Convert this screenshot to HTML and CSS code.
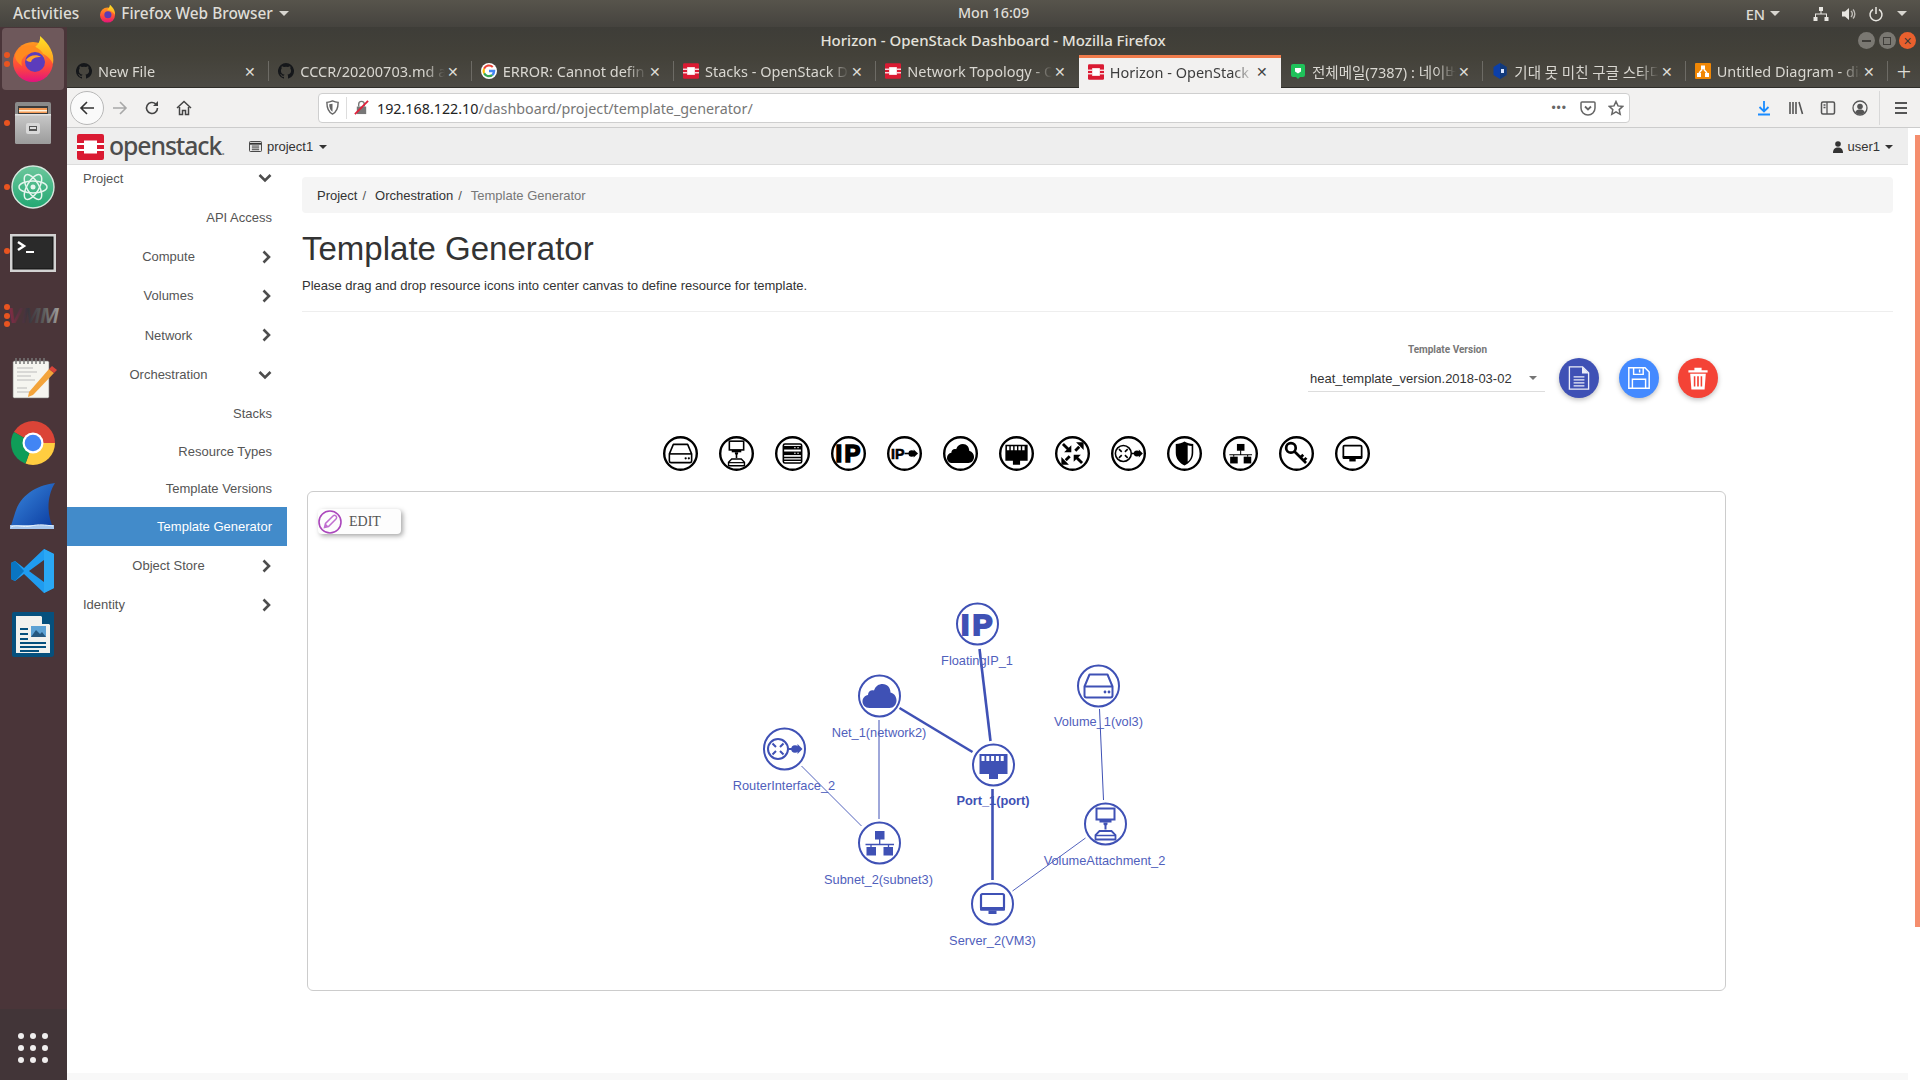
FILE: index.html
```html
<!DOCTYPE html>
<html lang="en">
<head>
<meta charset="utf-8">
<title>Horizon - OpenStack Dashboard</title>
<link rel="stylesheet" href="styles.css">
</head>
<body>
<svg class="defs" width="0" height="0" aria-hidden="true">
  <defs>
    <linearGradient id="g-fox" x1="0" y1="0" x2="0" y2="1"><stop offset="0" stop-color="#ff9a1f"/><stop offset=".6" stop-color="#ff4a3a"/><stop offset="1" stop-color="#e3127e"/></linearGradient>
    <linearGradient id="g-flame" x1="0" y1="0" x2="0" y2="1"><stop offset="0" stop-color="#ffe226"/><stop offset="1" stop-color="#ff9a1f"/></linearGradient>
    <linearGradient id="g-atom" x1="0" y1="0" x2="0" y2="1"><stop offset="0" stop-color="#6cc79c"/><stop offset="1" stop-color="#22a873"/></linearGradient>
    <linearGradient id="g-fin" x1="0" y1="0" x2="1" y2="1"><stop offset="0" stop-color="#3b8ae0"/><stop offset="1" stop-color="#0a3a9e"/></linearGradient>
    <linearGradient id="g-cab" x1="0" y1="0" x2="0" y2="1"><stop offset="0" stop-color="#c9c9c9"/><stop offset="1" stop-color="#9b9b9b"/></linearGradient>
    <linearGradient id="g-vm" x1="0" y1="0" x2="1" y2="0"><stop offset="0" stop-color="#8a2b45"/><stop offset=".4" stop-color="#3a353d"/><stop offset=".7" stop-color="#5c5c5c"/><stop offset="1" stop-color="#a0a0a0"/></linearGradient>
    <symbol id="f-github" viewBox="0 0 16 16"><path fill="#15171a" d="M8 0a8 8 0 0 0-2.500 15.600c.4.1.5-.2.5-.4v-1.400c-2.200.5-2.700-1-2.700-1-.4-.9-.9-1.200-.9-1.200-.7-.5.1-.5.1-.5.8.1 1.200.8 1.200.8.7 1.200 1.900.9 2.300.7.1-.5.3-.9.5-1.100-1.800-.2-3.600-.9-3.600-4 0-.9.3-1.600.8-2.100-.1-.2-.4-1 .1-2.100 0 0 .7-.2 2.200.8a7.600 7.600 0 0 1 4 0c1.500-1 2.200-.8 2.200-.8.500 1.100.200 1.900.100 2.100.500.500.800 1.200.800 2.100 0 3.100-1.900 3.800-3.700 4 .300.300.600.800.600 1.500v2.200c0 .200.100.500.500.400A8 8 0 0 0 8 0z"/></symbol>
    <symbol id="f-google" viewBox="0 0 16 16"><circle cx="8" cy="8" r="8" fill="#fff"/><path d="M8 3.600a4.300 4.300 0 0 1 3 1.200l1.500-1.500A6.500 6.500 0 0 0 2.200 5.100L4 6.500A4.200 4.200 0 0 1 8 3.600z" fill="#ea4335"/><path d="M14.300 8.100c0-.5 0-.9-.1-1.300H8v2.500h3.600a3 3 0 0 1-1.300 2l1.900 1.400a6.300 6.300 0 0 0 2.100-4.600z" fill="#4285f4"/><path d="M4 9.500l-1.800 1.400A6.500 6.500 0 0 0 12.200 12.700l-1.900-1.400A4.200 4.200 0 0 1 4 9.500z" fill="#34a853"/><path d="M3.800 8c0-.5.100-1 .2-1.500L2.200 5.100a6.500 6.500 0 0 0 0 5.800L4 9.500A4.300 4.300 0 0 1 3.800 8z" fill="#fbbc05"/></symbol>
    <symbol id="f-os" viewBox="0 0 27 26"><rect width="27" height="26" rx="2" fill="#da1a32"/><rect x="7" y="6.500" width="13" height="13" fill="#fff"/><rect y="9" width="7" height="2" fill="#fff"/><rect y="15" width="7" height="2" fill="#fff"/><rect x="20" y="9" width="7" height="2" fill="#fff"/><rect x="20" y="15" width="7" height="2" fill="#fff"/></symbol>
    <symbol id="f-naver" viewBox="0 0 16 16"><path d="M3 1h10a2 2 0 0 1 2 2v9a2 2 0 0 1-2 2H10l-2 2-2-2H3a2 2 0 0 1-2-2V3a2 2 0 0 1 2-2z" fill="#1fc25a"/><path d="M5 5h6v3.500L8 10.500 5 8.500z" fill="#fff"/></symbol>
    <symbol id="f-blue" viewBox="0 0 16 16"><path d="M8 0l6.500 4v8L8 16l-6.500-4V4z" fill="#0c3fa8"/><path d="M8 0l6.500 4v8L8 16z" fill="#123a7a"/><rect x="9" y="6" width="3" height="4" fill="#dbe6ff"/></symbol>
    <symbol id="f-drawio" viewBox="0 0 16 16"><rect width="16" height="16" rx="1" fill="#f08705"/><rect x="6" y="2.500" width="4" height="4" fill="#fff"/><rect x="2" y="10" width="4" height="4" fill="#fff"/><rect x="10" y="10" width="4" height="4" fill="#fff"/><path d="M7 6.500L4 10M9 6.500l3 3.500" stroke="#fff" stroke-width="1.400"/></symbol>

    <symbol id="n-volume" viewBox="0 0 44 44"><circle class="ring" cx="22" cy="22" r="20.500" fill="none" stroke="currentColor"/><path d="M13 10.500h18l5 12v9a2 2 0 0 1-2 2H10a2 2 0 0 1-2-2v-9z" fill="none" stroke="currentColor" stroke-width="2" stroke-linejoin="round"/><path d="M8 22.500h28" stroke="currentColor" stroke-width="2"/><circle cx="28.500" cy="28" r="1.400" fill="currentColor"/><circle cx="32.500" cy="28" r="1.400" fill="currentColor"/></symbol>
    <symbol id="n-attach" viewBox="0 0 44 44"><circle class="ring" cx="22" cy="22" r="20.500" fill="none" stroke="currentColor"/><rect x="13" y="6.500" width="18" height="11" fill="none" stroke="currentColor" stroke-width="2"/><rect x="16" y="17.500" width="12" height="3" fill="currentColor"/><path d="M20 20.500h4v2l-1 1v4h-2v-4l-1-1z" fill="currentColor"/><path d="M16 29h12l4 4v4.500H12V33z" fill="none" stroke="currentColor" stroke-width="1.800"/><path d="M12 33.500h20" stroke="currentColor" stroke-width="1.500"/></symbol>
    <symbol id="n-rack" viewBox="0 0 44 44"><circle class="ring" cx="22" cy="22" r="20.500" fill="none" stroke="currentColor"/><rect x="10.500" y="10" width="23" height="24" rx="2" fill="none" stroke="currentColor" stroke-width="2"/><rect x="10.500" y="12.500" width="23" height="4.500" fill="currentColor"/><rect x="10.500" y="19.500" width="23" height="4.500" fill="currentColor"/><path d="M11 27h22M11 30.500h22" stroke="currentColor" stroke-width="2"/><path d="M24 14.700h2M28 14.700h2M24 21.700h2M28 21.700h2" stroke="#fff" stroke-width="1.200"/></symbol>
    <symbol id="n-ip" viewBox="0 0 44 44"><circle class="ring" cx="22" cy="22" r="20.500" fill="none" stroke="currentColor"/><text x="22.800" y="33" text-anchor="middle" font-family="Liberation Sans" font-weight="700" font-size="30" letter-spacing="3" fill="currentColor" stroke="currentColor" stroke-width="2">IP</text></symbol>
    <symbol id="n-iparrow" viewBox="0 0 44 44"><circle class="ring" cx="22" cy="22" r="20.500" fill="none" stroke="currentColor"/><text x="5" y="28.500" font-family="Liberation Sans" font-weight="700" font-size="18" fill="currentColor" stroke="currentColor" stroke-width=".7">IP</text><path d="M22 22h7" stroke="currentColor" stroke-width="2"/><circle cx="31" cy="22" r="4" fill="currentColor"/><path d="M33.500 17l5.500 5-5.500 5z" fill="currentColor"/></symbol>
    <symbol id="n-cloud" viewBox="0 0 44 44"><circle class="ring" cx="22" cy="22" r="20.500" fill="none" stroke="currentColor"/><path d="M12 34C7.500 34 5 30.500 5 27.500 5 24 7.500 21.500 10.500 21 10.500 17.500 13.500 15.500 16.500 16.500 18 12 21.500 10 25 10 30 10 33 14 33 18.500 37 19.500 39 23 39 26.500 39 30.500 36 34 32 34z" fill="currentColor"/></symbol>
    <symbol id="n-port" viewBox="0 0 44 44"><circle class="ring" cx="22" cy="22" r="20.500" fill="none" stroke="currentColor"/><path fill-rule="evenodd" fill="currentColor" d="M8 11h28v20h-9.500v5h-9v-5H8zM10 13v5h3v-5zM14.800 13v5h3v-5zM19.600 13v5h3v-5zM24.400 13v5h3v-5zM29.200 13v5h3v-5z"/></symbol>
    <symbol id="n-router" viewBox="0 0 44 44"><circle class="ring" cx="22" cy="22" r="20.500" fill="none" stroke="currentColor"/><path d="M10 10l7 7M25.500 18.500l5-5M18.500 25.500l-5 5M34 34l-7-7" stroke="currentColor" stroke-width="3.600"/><path d="M20.500 20.500v-9l-9 9zM36 8h-9.500l9.500 9.500zM8 36h9.500L8 26.500zM23.500 23.500v9l9-9z" fill="currentColor"/></symbol>
    <symbol id="n-routerif" viewBox="0 0 44 44"><circle class="ring" cx="22" cy="22" r="20.500" fill="none" stroke="currentColor"/><circle cx="15.500" cy="22" r="10" fill="none" stroke="currentColor" stroke-width="2"/><path d="M10 16.500l3.500 3.500M21 16.500L17.500 20M10 27.500l3.500-3.500M21 27.500L17.500 24" stroke="currentColor" stroke-width="2"/><path d="M26 22h4" stroke="currentColor" stroke-width="2"/><circle cx="32.500" cy="22" r="3.800" fill="currentColor"/><path d="M35 17l5 5-5 5z" fill="currentColor"/></symbol>
    <symbol id="n-shield" viewBox="0 0 44 44"><circle class="ring" cx="22" cy="22" r="20.500" fill="none" stroke="currentColor"/><path d="M11 10c4 0 8-1 11-3 3 2 7 3 11 3v11c0 8-5 13-11 16-6-3-11-8-11-16z" fill="currentColor"/><path d="M26 11.500c1.500.6 3.200 1 5 1v8.500c0 5.500-2.200 9-5 11.500z" fill="#fff"/></symbol>
    <symbol id="n-subnet" viewBox="0 0 44 44"><circle class="ring" cx="22" cy="22" r="20.500" fill="none" stroke="currentColor"/><rect x="17.500" y="10" width="9.500" height="8.500" fill="currentColor"/><rect x="9" y="26" width="9.500" height="8.500" fill="currentColor"/><rect x="26" y="26" width="9.500" height="8.500" fill="currentColor"/><path d="M22.200 18v5.500M8 23.500h28.500M13.500 23.500V26M31 23.500V26" stroke="currentColor" stroke-width="1.300" fill="none"/></symbol>
    <symbol id="n-key" viewBox="0 0 44 44"><circle class="ring" cx="22" cy="22" r="20.500" fill="none" stroke="currentColor"/><circle cx="15" cy="15" r="6" fill="none" stroke="currentColor" stroke-width="3.400"/><path d="M19.500 19.500L34 34M27 27l3.500-3.500M31 31l3.500-3.500" stroke="currentColor" stroke-width="3.400"/></symbol>
    <symbol id="n-server" viewBox="0 0 44 44"><circle class="ring" cx="22" cy="22" r="20.500" fill="none" stroke="currentColor"/><rect x="10.500" y="12" width="23" height="15" rx="1.500" fill="none" stroke="currentColor" stroke-width="2.200"/><rect x="9.500" y="25" width="25" height="3.800" rx="1" fill="currentColor"/><rect x="18" y="28.500" width="8" height="3.500" fill="currentColor"/></symbol>
  </defs>
</svg>

<header class="topbar">
  <span class="top-left">Activities</span>
  <svg class="top-fox" viewBox="0 0 48 48"><circle cx="24" cy="28" r="19" fill="url(#g-fox)"/><path d="M30 2c8 7 14 15 13 26-4-8-12-12-20-12 3-4 7-8 7-14z" fill="url(#g-flame)"/><circle cx="25" cy="27" r="9" fill="#5b3bb5"/></svg>
  <span class="top-left">Firefox Web Browser</span>
  <i class="caret caret-light"></i>
  <span class="clock">Mon 16:09</span>
  <div class="tray">
    <span class="en">EN</span><i class="caret caret-light"></i>
    <svg class="tray-net" viewBox="0 0 16 16"><path fill="#e8e6e1" d="M6 1h4v4H8.500v2.500H14V11h1.500v4h-4v-4H13V8.500H3V11h1.500v4h-4v-4H2V7.500h5.500V5H6z"/></svg>
    <svg class="tray-vol" viewBox="0 0 16 16"><path fill="#e8e6e1" d="M1 5.500h3L8 2v12l-4-3.500H1z"/><path d="M10 5a4 4 0 0 1 0 6M12 3.500a6.500 6.500 0 0 1 0 9" stroke="#bdbbb6" stroke-width="1.400" fill="none"/></svg>
    <svg class="tray-pow" viewBox="0 0 16 16"><path d="M5 3.500a6 6 0 1 0 6 0" stroke="#e8e6e1" stroke-width="1.500" fill="none"/><path d="M8 1v7" stroke="#e8e6e1" stroke-width="1.500"/></svg>
    <i class="caret caret-light"></i>
  </div>
</header>

<div class="desktop">
  <aside class="dock">
    <div class="dock-list">
      <div class="dock-item active"><i class="pip pip-a"></i><i class="pip pip-b"></i>
        <svg class="dock-ico" viewBox="0 0 48 48"><circle cx="24" cy="27" r="20" fill="url(#g-fox)"/><path d="M31 1c9 8 15 17 13 28-4-9-13-13-22-13 4-4 10-8 9-15z" fill="url(#g-flame)"/><path d="M6 20c3-8 11-11 18-9 6 2 11 6 12 14-4-6-10-8-16-6-5 1-9 6-7 12-4-3-7-6-7-11z" fill="#ff8a1f"/><circle cx="26" cy="27" r="10" fill="#5c3cbc"/><path d="M17 25c3-5 11-6 15-3-5 0-9 1-10 5-2 0-4-1-5-2z" fill="#ff9f2a"/></svg></div>
      <div class="dock-item"><i class="pip pip-c"></i>
        <svg class="dock-ico" viewBox="0 0 48 48"><rect x="6" y="3" width="36" height="16" rx="2" fill="#8a8a8a"/><rect x="9" y="7" width="30" height="10" fill="#3b3b3b"/><rect x="10" y="9" width="28" height="5" fill="#f59a55"/><rect x="10" y="11" width="28" height="1.500" fill="#fff2dc"/><rect x="6" y="15" width="36" height="30" rx="1.500" fill="url(#g-cab)"/><rect x="6" y="15" width="36" height="1.500" fill="#e2e2e2"/><rect x="17" y="24" width="14" height="11" rx="2" fill="#d8d8d8"/><rect x="20" y="27" width="8" height="5" fill="#555"/><rect x="21" y="28" width="6" height="2" fill="#ddd"/></svg></div>
      <div class="dock-item"><i class="pip pip-c"></i>
        <svg class="dock-ico" viewBox="0 0 48 48"><circle cx="24" cy="24" r="21" fill="url(#g-atom)" stroke="#d6e8df" stroke-width="1.400"/><g fill="none" stroke="#e6f5ee" stroke-width="1.500"><ellipse cx="24" cy="24" rx="14" ry="6"/><ellipse cx="24" cy="24" rx="14" ry="6" transform="rotate(60 24 24)"/><ellipse cx="24" cy="24" rx="14" ry="6" transform="rotate(120 24 24)"/></g><circle cx="24" cy="24" r="2.500" fill="#e6f5ee"/></svg></div>
      <div class="dock-item dock-term"><i class="pip pip-c"></i>
        <svg class="dock-ico" viewBox="0 0 48 48"><rect x="1" y="5" width="46" height="38" fill="#d2d2d2"/><rect x="4" y="8" width="40" height="32" fill="#2a2a2a" stroke="#111"/><path d="M9 13l6 4-6 4" fill="none" stroke="#fff" stroke-width="2.500"/><path d="M17 23h8" stroke="#fff" stroke-width="2"/></svg></div>
      <div class="dock-item"><i class="pip pip-v1"></i><i class="pip pip-v2"></i><i class="pip pip-v3"></i>
        <svg class="dock-wide" viewBox="-6 0 60 48"><text x="24" y="32" text-anchor="middle" font-family="Liberation Sans" font-weight="700" font-style="italic" font-size="22" fill="url(#g-vm)">VMM</text></svg></div>
      <div class="dock-item">
        <svg class="dock-ico" viewBox="0 0 48 48"><rect x="4" y="6" width="36" height="37" rx="1.500" fill="#f5f5f0" stroke="#777" stroke-width=".6"/><path d="M7 3v6M11 3v6M15 3v6M19 3v6M23 3v6M27 3v6M31 3v6M35 3v6" stroke="#777" stroke-width="1.500"/><path d="M8 13h16M8 17h20M8 21h14M8 25h18M8 33h10M8 37h14" stroke="#bbb" stroke-width="1"/><path d="M20 37l20-23 5 4-21 22-5 2z" fill="#f3a43b"/><path d="M40 14l3-3 5 4-3 3z" fill="#d8453a"/></svg></div>
      <div class="dock-item">
        <svg class="dock-ico" viewBox="0 0 48 48"><defs><clipPath id="chrome-clip"><circle cx="24" cy="24" r="22"/></clipPath></defs><g clip-path="url(#chrome-clip)"><polygon points="24,24 -10.600,4 -10,-20 64,-20 64,24" fill="#db4437"/><polygon points="24,24 64,24 64,70 10.300,61.600" fill="#ffcd40"/><polygon points="24,24 10.300,61.600 -20,70 -20,4 -10.600,4" fill="#0f9d58"/></g><circle cx="24" cy="24" r="10.500" fill="#fff"/><circle cx="24" cy="24" r="8.300" fill="#4285f4"/></svg></div>
      <div class="dock-item">
        <svg class="dock-ico" viewBox="0 0 48 48"><path d="M46 0C30 2 12 10 6 30L1 46h44C38 34 37 14 46 0z" fill="url(#g-fin)"/><path d="M1 42h44v4H1z" fill="#a9c8ee"/><path d="M2 44c6-3 12 1 20-1s14-1 22 0" stroke="#e5f0fb" fill="none"/></svg></div>
      <div class="dock-item">
        <svg class="dock-ico" viewBox="0 0 48 48"><path d="M35 2l10 5v34l-10 5-20-19-9 7-4-2V16l4-2 9 7z" fill="#1f9cf0"/><path d="M35 2v44l10-5V7z" fill="#2aa8f5"/><path d="M35 13L20 24l15 11z" fill="#4a3539"/><path d="M6 14l-4 2v16l4 2 9-10z" fill="#0a75c2"/></svg></div>
      <div class="dock-item">
        <svg class="dock-ico" viewBox="0 0 48 48"><path d="M5 1h28l12 12v30a3 3 0 0 1-3 3H5a2 2 0 0 1-2-2V3a2 2 0 0 1 2-2z" fill="#06507d"/><path d="M7 5h25l9 9v28H7z" fill="#f2f2ee"/><path d="M33 1h12v12H33z" fill="#06507d"/><rect x="11" y="17" width="8" height="2" fill="#06507d"/><rect x="11" y="22" width="8" height="2" fill="#06507d"/><rect x="11" y="27" width="8" height="2" fill="#06507d"/><rect x="22" y="15" width="15" height="11" fill="#5da2d4"/><path d="M22 26l5-7 4 4 2-2 4 5z" fill="#26587f"/><path d="M11 32h26M11 36h26M11 40h19" stroke="#06507d" stroke-width="1.800"/></svg></div>
    </div>
    <div class="dock-apps">
      <svg class="apps-grid" viewBox="0 0 30 30"><g fill="#f0eeee"><circle cx="3" cy="3" r="3"/><circle cx="15" cy="3" r="3"/><circle cx="27" cy="3" r="3"/><circle cx="3" cy="15" r="3"/><circle cx="15" cy="15" r="3"/><circle cx="27" cy="15" r="3"/><circle cx="3" cy="27" r="3"/><circle cx="15" cy="27" r="3"/><circle cx="27" cy="27" r="3"/></g></svg>
    </div>
  </aside>

  <div class="window">
    <div class="titlebar">
      <span class="title">Horizon - OpenStack Dashboard - Mozilla Firefox</span>
      <div class="win-btns">
        <span class="win-btn"><i class="wb-min"></i></span>
        <span class="win-btn"><i class="wb-max"></i></span>
        <span class="win-btn wb-close">×</span>
      </div>
    </div>

    <div class="tabs">
      <div class="tab"><svg class="fav"><use href="#f-github"/></svg><span class="tab-label">New File</span><span class="tab-x">✕</span></div>
      <div class="tab"><svg class="fav"><use href="#f-github"/></svg><span class="tab-label">CCCR/20200703.md a</span><span class="tab-x">✕</span></div>
      <div class="tab"><svg class="fav"><use href="#f-google"/></svg><span class="tab-label">ERROR: Cannot defin</span><span class="tab-x">✕</span></div>
      <div class="tab"><svg class="fav"><use href="#f-os"/></svg><span class="tab-label">Stacks - OpenStack D</span><span class="tab-x">✕</span></div>
      <div class="tab pre-active"><svg class="fav"><use href="#f-os"/></svg><span class="tab-label">Network Topology - O</span><span class="tab-x">✕</span></div>
      <div class="tab active"><svg class="fav"><use href="#f-os"/></svg><span class="tab-label">Horizon - OpenStack I</span><span class="tab-x">✕</span></div>
      <div class="tab"><svg class="fav"><use href="#f-naver"/></svg><span class="tab-label">전체메일(7387) : 네이버</span><span class="tab-x">✕</span></div>
      <div class="tab"><svg class="fav"><use href="#f-blue"/></svg><span class="tab-label">기대 못 미친 구글 스타디</span><span class="tab-x">✕</span></div>
      <div class="tab"><svg class="fav"><use href="#f-drawio"/></svg><span class="tab-label">Untitled Diagram - dia</span><span class="tab-x">✕</span></div>
      <div class="tab-new">+</div>
    </div>

    <div class="toolbar">
      <span class="back"><svg class="tb" viewBox="0 0 16 16"><path d="M15 8H2M8 2L2 8l6 6" fill="none" stroke="#333" stroke-width="1.600"/></svg></span>
      <svg class="tb tb-fwd" viewBox="0 0 16 16"><path d="M1 8h13M8 2l6 6-6 6" fill="none" stroke="#a8a8a8" stroke-width="1.600"/></svg>
      <svg class="tb tb-rel" viewBox="0 0 16 16"><path d="M13.500 8a5.500 5.500 0 1 1-1.800-4.100" fill="none" stroke="#444" stroke-width="1.600"/><path d="M14 1v5H9z" fill="#444"/></svg>
      <svg class="tb tb-home" viewBox="0 0 16 16"><path d="M1 8l7-6.500L15 8M3.500 7v7.500h3v-4h3v4h3V7" fill="none" stroke="#444" stroke-width="1.500"/></svg>
      <div class="urlbar">
        <svg class="url-shield" viewBox="0 0 16 16"><path d="M8 1c2 1 4 1.500 6 1.500 0 6-1.500 10.500-6 12.500C3.500 13 2 8.500 2 2.500 4 2.500 6 2 8 1z" fill="none" stroke="#666" stroke-width="1.500"/><path d="M8 4v8.500C5.500 11 4.500 8 4.500 4.500z" fill="#666"/></svg>
        <i class="url-sep"></i>
        <svg class="url-lock" viewBox="0 0 16 16"><rect x="3" y="7" width="10" height="8" fill="#777"/><path d="M5 7V4.500a3 3 0 0 1 6 0V7" fill="none" stroke="#777" stroke-width="1.500"/><path d="M1 15L15 1" stroke="#e0203a" stroke-width="2"/></svg>
        <span class="url"><b>192.168.122.10</b>/dashboard/project/template_generator/</span>
        <span class="url-dots">•••</span>
        <svg class="url-ic" viewBox="0 0 16 16"><path d="M2 2h12a1 1 0 0 1 1 1v5a7 7 0 0 1-14 0V3a1 1 0 0 1 1-1z" fill="none" stroke="#666" stroke-width="1.500"/><path d="M5 6.500l3 3 3-3" fill="none" stroke="#666" stroke-width="1.800"/></svg>
        <svg class="url-ic url-star" viewBox="0 0 16 16"><path d="M8 1.500l2 4.400 4.800.5-3.600 3.200 1 4.700L8 11.900l-4.200 2.400 1-4.700L1.200 6.400 6 5.900z" fill="none" stroke="#666" stroke-width="1.500"/></svg>
      </div>
      <div class="tools">
        <svg class="tb" viewBox="0 0 16 16"><path d="M8 1v10M3.500 7L8 11.500 12.500 7M2 14.500h12" fill="none" stroke="#1a8cff" stroke-width="1.800"/></svg>
        <svg class="tb" viewBox="0 0 16 16"><path d="M2 2v12M5 2v12M8 2v12M11 2l3.500 12" fill="none" stroke="#555" stroke-width="1.600"/></svg>
        <svg class="tb" viewBox="0 0 16 16"><rect x="1.500" y="2" width="13" height="12" rx="1.500" fill="none" stroke="#555" stroke-width="1.500"/><path d="M7 2v12M3.500 5h2M3.500 7.500h2" stroke="#555" stroke-width="1.300"/></svg>
        <svg class="tb" viewBox="0 0 16 16"><circle cx="8" cy="8" r="7" fill="none" stroke="#555" stroke-width="1.300"/><circle cx="8" cy="6.500" r="2.800" fill="#555"/><path d="M3 12.500c1-2.500 3-3 5-3s4 .5 5 3c-3 2.500-7 2.500-10 0z" fill="#555"/></svg>
        <i class="tool-sep"></i>
        <svg class="tb" viewBox="0 0 16 16"><path d="M2 3h12M2 8h12M2 13h12" stroke="#555" stroke-width="1.800"/></svg>
      </div>
    </div>

    <div class="page">
      <div class="page-body">
        <nav class="navbar">
          <svg class="os-logo"><use href="#f-os"/></svg>
          <span class="os-name">openstack<small>.</small></span>
          <div class="proj">
            <svg class="proj-ic" viewBox="0 0 14 12"><rect x=".5" y=".5" width="13" height="11" rx="1" fill="none" stroke="#333"/><path d="M1 3h12" stroke="#333" stroke-width="2"/><path d="M3 5.500h8M3 7.500h8M3 9.500h8" stroke="#333"/></svg>
            <span>project1</span><i class="caret caret-dark"></i>
          </div>
          <div class="user">
            <svg class="user-ic" viewBox="0 0 10 12"><circle cx="5" cy="3" r="2.800" fill="#333"/><path d="M0 12c0-4 2-5.500 5-5.500s5 1.500 5 5.500z" fill="#333"/></svg>
            <span>user1</span><i class="caret caret-dark"></i>
          </div>
        </nav>

        <div class="columns">
          <nav class="side">
            <a class="row row-first"><span class="lab-left">Project</span><svg class="chev"><use href="#c-down"/></svg></a>
            <a class="row row-end">API Access</a>
            <a class="row"><span class="lab-mid">Compute</span><svg class="chev"><use href="#c-right"/></svg></a>
            <a class="row"><span class="lab-mid">Volumes</span><svg class="chev"><use href="#c-right"/></svg></a>
            <a class="row row-40"><span class="lab-mid">Network</span><svg class="chev"><use href="#c-right"/></svg></a>
            <a class="row"><span class="lab-mid">Orchestration</span><svg class="chev"><use href="#c-down"/></svg></a>
            <a class="row row-end">Stacks</a>
            <a class="row row-end row-37">Resource Types</a>
            <a class="row row-end row-37">Template Versions</a>
            <a class="row row-end row-on">Template Generator</a>
            <a class="row"><span class="lab-mid">Object Store</span><svg class="chev"><use href="#c-right"/></svg></a>
            <a class="row"><span class="lab-left">Identity</span><svg class="chev"><use href="#c-right"/></svg></a>
            <svg class="defs" width="0" height="0"><symbol id="c-right" viewBox="0 0 18 14"><path d="M9.500 1.500L15 7 9.500 12.500" fill="none" stroke="#4d4d4d" stroke-width="2.600"/></symbol><symbol id="c-down" viewBox="0 0 18 14"><path d="M5.500 4L11 9.500 16.500 4" fill="none" stroke="#4d4d4d" stroke-width="2.600"/></symbol></svg>
          </nav>

          <main class="main">
            <ol class="crumbs">
              <li>Project</li><li class="slash">/</li><li>Orchestration</li><li class="slash">/</li><li class="crumb-on">Template Generator</li>
            </ol>
            <h1 class="h1">Template Generator</h1>
            <p class="lead">Please drag and drop resource icons into center canvas to define resource for template.</p>
            <div class="rule"></div>

            <div class="version-row">
              <div class="version">
                <label class="version-label">Template Version</label>
                <div class="version-select"><span>heat_template_version.2018-03-02</span><i class="sel-caret"></i></div>
              </div>
              <div class="fabs">
                <button class="fab fab-indigo"><svg viewBox="0 0 20 20"><path d="M2 .7h11l5 5v13.600H2z" fill="none" stroke="#fff" stroke-width="1.100" opacity=".9"/><path d="M12.500 .7v5.500h5.500z" fill="#fff" opacity=".9"/><path d="M5.500 9h9M5.500 11.500h9M5.500 14h9M5.500 16.500h9" stroke="#fff" stroke-width="1.100" opacity=".9"/></svg></button>
                <button class="fab fab-blue"><svg viewBox="0 0 20 20"><path d="M1.500 1.500h13.500l3.500 3.500v13.500h-17z" fill="none" stroke="#fff" stroke-width="1.200"/><path d="M5.500 1.500v5.500h8V1.500M10.500 3v2.500M4.500 18.500v-7.500h11v7.500" fill="none" stroke="#fff" stroke-width="1.200"/></svg></button>
                <button class="fab fab-red"><svg viewBox="0 0 20 20"><path d="M2 3.500h16v2H2zM7 3.500V1.500h6v2z" fill="#fff"/><path fill-rule="evenodd" d="M3.500 6.500h13l-1 13h-11zM6.500 8.500v8.500h1.300V8.500zM9.300 8.500v8.500h1.400V8.500zM12.200 8.500v8.500h1.300V8.500z" fill="#fff"/></svg></button>
              </div>
            </div>

            <div class="palette">
              <svg class="pal"><use href="#n-volume"/></svg>
              <svg class="pal"><use href="#n-attach"/></svg>
              <svg class="pal"><use href="#n-rack"/></svg>
              <svg class="pal"><use href="#n-ip"/></svg>
              <svg class="pal"><use href="#n-iparrow"/></svg>
              <svg class="pal"><use href="#n-cloud"/></svg>
              <svg class="pal"><use href="#n-port"/></svg>
              <svg class="pal"><use href="#n-router"/></svg>
              <svg class="pal"><use href="#n-routerif"/></svg>
              <svg class="pal"><use href="#n-shield"/></svg>
              <svg class="pal"><use href="#n-subnet"/></svg>
              <svg class="pal"><use href="#n-key"/></svg>
              <svg class="pal"><use href="#n-server"/></svg>
            </div>

            <section class="canvas">
              <div class="edit">
                <svg class="edit-ic" viewBox="0 0 24 24"><circle cx="12" cy="12" r="11" fill="none" stroke="#ab47bc" stroke-width="1.600"/><path d="M6.500 17.500l1-4 7.500-7.500a2 2 0 0 1 3 3l-7.500 7.500z" fill="none" stroke="#c06fd0" stroke-width="1.500"/><path d="M6.500 17.500l1-4 3 3z" fill="#c06fd0"/></svg>
                <span>EDIT</span>
              </div>
              <svg class="graph" viewBox="308 492 1416 498">
                <g stroke="#3f51b5" fill="none">
                  <path d="M979 649L990 741" stroke-width="2.600"/>
                  <path d="M899 708L972 752" stroke-width="2.600"/>
                  <path d="M992 789V880" stroke-width="2.600"/>
                  <path d="M878.500 720V819" stroke-width="1"/>
                  <path d="M801 766L861 826" stroke-width=".9"/>
                  <path d="M1099 709L1103 800" stroke-width="1"/>
                  <path d="M1085 838L1012 891" stroke-width=".9"/>
                </g>
                <g class="nodes">
                  <use href="#n-ip" x="955" y="602" width="44" height="44"/>
                  <use href="#n-cloud" x="857" y="674" width="44" height="44"/>
                  <use href="#n-routerif" x="762" y="727" width="44" height="44"/>
                  <use href="#n-port" x="971" y="743" width="44" height="44"/>
                  <use href="#n-subnet" x="857" y="821" width="44" height="44"/>
                  <use href="#n-server" x="970" y="882" width="44" height="44"/>
                  <use href="#n-volume" x="1076" y="664" width="44" height="44"/>
                  <use href="#n-attach" x="1083" y="802" width="44" height="44"/>
                </g>
                <g class="labels">
                  <text x="976.500" y="665">FloatingIP_1</text>
                  <text x="878.500" y="737">Net_1(network2)</text>
                  <text x="783.500" y="790">RouterInterface_2</text>
                  <text class="sel" x="992.500" y="805">Port_1(port)</text>
                  <text x="878" y="884">Subnet_2(subnet3)</text>
                  <text x="992" y="945">Server_2(VM3)</text>
                  <text x="1098" y="726">Volume_1(vol3)</text>
                  <text x="1104" y="865">VolumeAttachment_2</text>
                </g>
              </svg>
            </section>
          </main>
        </div>
        <div class="strip"></div>
      </div>
      <div class="scrollbar"><i class="thumb"></i></div>
    </div>
  </div>
</div>
</body>
</html>
```

FILE: styles.css
```css
* { box-sizing: border-box; }
html, body { margin: 0; padding: 0; height: 100%; }
body {
  width: 1920px; height: 1080px; overflow: hidden;
  display: flex; flex-direction: column;
  font-family: "Liberation Sans", Arial, sans-serif; font-size: 13px; color: #333;
  background: #fff;
}
.defs { position: absolute; }
i { display: block; font-style: normal; }
.caret { width: 0; height: 0; border-left: 5px solid transparent; border-right: 5px solid transparent; border-top: 5px solid; }
.caret-light { color: #d8d6d0; }
.caret-dark { color: #333; border-left-width: 4px; border-right-width: 4px; border-top-width: 4px; }

/* top panel */
.topbar {
  height: 27px; flex: none; display: flex; align-items: center; padding: 0 0 0 13px;
  background: linear-gradient(#57544c, #45433e);
  color: #dfddd7; font: 500 15.400px "Noto Sans", sans-serif; position: relative;
}
.top-left { white-space: nowrap; }
.top-fox { width: 19px; height: 19px; margin: 0 4px 0 19px; }
.topbar .caret { margin-left: 6px; }
.clock { position: absolute; left: 958px; top: 3px; font-size: 14.300px; }
.tray { margin-left: auto; display: flex; align-items: center; }
.en { font-size: 14.500px; }
.tray .caret { margin-left: 5px; }
.tray-net { width: 16px; height: 16px; margin-left: 32.500px; }
.tray-vol { width: 16px; height: 16px; margin-left: 12px; }
.tray-pow { width: 16px; height: 16px; margin-left: 11.500px; }
.tray > .caret:last-child { margin: 0 13px 0 13px; }

/* dock */
.desktop { flex: 1; display: flex; min-height: 0; }
.dock {
  width: 67px; flex: none; display: flex; flex-direction: column;
  background: #4a3539;
}
.dock-list { flex: 1; padding-top: 1px; display: flex; flex-direction: column; gap: 2px; }
.dock-item { height: 62px; margin: 0 3px 0 2px; display: flex; align-items: center; justify-content: center; position: relative; border-radius: 4px; }
.dock-item.active { background: #6e585b; }
.dock-ico { width: 48px; height: 48px; }
.dock-wide { width: 60px; height: 48px; }
.dock-term .dock-ico { margin-top: 3px; }
.pip { position: absolute; left: 2px; width: 6px; height: 6px; border-radius: 50%; background: #e95420; }
.pip-a { top: 24px; } .pip-b { top: 33px; }
.pip-c { top: 28px; }
.pip-v1 { top: 20px; } .pip-v2 { top: 29px; } .pip-v3 { top: 37px; }
.dock-apps { height: 71px; background: #423538; display: flex; align-items: center; justify-content: center; padding: 6px 1px 0 0; }
.apps-grid { width: 30px; height: 30px; }

/* window */
.window { flex: 1; min-width: 0; display: flex; flex-direction: column; }
.titlebar {
  height: 28px; flex: none; display: flex; align-items: center; justify-content: center; position: relative;
  background: linear-gradient(#3e3d38, #434139);
}
.title { color: #e4e2dc; font: 500 15px "Noto Sans", sans-serif; margin: -2px 0 0 -1px; }
.win-btns { position: absolute; right: 4px; top: 5px; display: flex; gap: 3.500px; }
.win-btn { width: 17px; height: 17px; border-radius: 50%; background: #7a7872; display: flex; align-items: center; justify-content: center; color: #3c3a36; }
.wb-min { width: 9px; height: 2px; background: #3f3d39; }
.wb-max { width: 8px; height: 8px; border: 1.5px solid #3f3d39; }
.wb-close { background: #e9602e; font-size: 14px; line-height: 1; }

.tabs {
  height: 33px; flex: none; display: flex; border-bottom: 1px solid #2e2d29;
  background: linear-gradient(#434139, #4c4a44);
}
.tab {
  width: 202.33px; flex: none; display: flex; align-items: center; padding: 0 11px 0 9px; position: relative;
  color: #d9d7d1; font: 400 14.500px "Noto Sans", "Noto Sans CJK KR", sans-serif;
}
.tab::after { content: ""; position: absolute; right: 0; top: 6px; bottom: 6px; width: 1px; background: #6d6b65; }
.tab.pre-active::after { display: none; }
.tab.active::after { display: none; }
.tab.active { background: #f2f1f0; color: #3d3d3d; border-top: 3px solid #f07c4c; margin-bottom: -1px; height: 33px; padding-bottom: 3px; }
.fav { width: 16px; height: 16px; flex: none; }
.tab-label {
  flex: 1; min-width: 0; margin-left: 6px; white-space: nowrap;
  -webkit-mask-image: linear-gradient(90deg, #000 86%, transparent 100%);
  mask-image: linear-gradient(90deg, #000 86%, transparent 100%);
}
.tab-x { flex: none; width: 16px; text-align: center; font-size: 14px; color: #dedcd6; }
.tab.active .tab-x { color: #444; }
.tab-new { flex: 1; display: flex; align-items: center; justify-content: center; color: #dedcd6; font: 300 26px "Noto Sans", sans-serif; line-height: 1; }

.toolbar {
  height: 40px; flex: none; display: flex; align-items: center; background: #f2f1f0;
  border-bottom: 1px solid #ccc; padding-left: 3px;
}
.back { width: 34px; height: 34px; border-radius: 50%; border: 1px solid #b8b8b8; background: #fafafa; display: flex; align-items: center; justify-content: center; }
.tb { width: 16px; height: 16px; flex: none; }
.tb-fwd { margin-left: 8px; }
.tb-rel { margin-left: 16px; }
.tb-home { margin-left: 16px; }
.urlbar {
  width: 1312px; height: 30px; margin-left: 126px; display: flex; align-items: center;
  background: #fff; border: 1px solid #cfcfcf; border-radius: 4px; padding-left: 6px;
}
.url-shield { width: 15px; height: 15px; flex: none; }
.url-sep { width: 1px; height: 22px; background: #ddd; margin-left: 6px; }
.url-lock { width: 15px; height: 15px; margin-left: 7px; flex: none; }
.url { margin: 1px 0 0 8px; font: 400 14.300px "Noto Sans", sans-serif; color: #777; white-space: nowrap; }
.url b { font-weight: 400; color: #222; }
.url-dots { margin-left: auto; color: #666; font-size: 12px; letter-spacing: 1px; }
.url-ic { width: 16px; height: 16px; margin-left: 13px; flex: none; }
.url-star { margin-right: 5px; margin-left: 12px; }
.tools { flex: 1; display: flex; align-items: center; justify-content: flex-end; gap: 16px; padding-right: 11px; height: 100%; }
.tool-sep { width: 1px; height: 34px; background: #d8d8d8; margin: 0 -3px 0 -5px; }

/* page */
.page { flex: 1; min-height: 0; display: flex; }
.page-body { flex: 1; min-width: 0; display: flex; flex-direction: column; }
.scrollbar { width: 12px; flex: none; padding: 7px 0 0 7px; }
.thumb { width: 5px; height: 792px; background: #f58e6e; }
.navbar {
  height: 37px; flex: none; display: flex; align-items: center; position: relative;
  background: #eee; border-bottom: 1px solid #ddd; padding: 1px 0 0 10px;
}
.os-logo { width: 27px; height: 26px; flex: none; }
.os-name { margin: -3px 0 0 5px; font: 500 24.800px "Noto Sans", sans-serif; letter-spacing: -1.100px; color: #4d4d4d; line-height: 1; }
.os-name small { font-size: 14px; color: #888; }
.proj { display: flex; align-items: center; margin-left: 25px; font-size: 13px; color: #333; }
.proj-ic { width: 13px; height: 11px; margin-right: 5px; }
.proj .caret { margin-left: 6px; }
.user { margin-left: auto; display: flex; align-items: center; padding-right: 15px; font-size: 13px; }
.user-ic { width: 10px; height: 12px; margin-right: 4px; }
.user .caret { margin-left: 5px; }

.columns { flex: 1; min-height: 0; display: flex; }
.side { width: 220px; flex: none; color: #555; }
.row { display: flex; align-items: center; height: 39px; padding: 0 15px 0 16px; font-size: 13px; }
.row-first { height: 33px; padding-bottom: 7px; }
.row-40 { height: 40px; }
.row-37 { height: 37px; }
.row-end { justify-content: flex-end; }
.row-on { background: #428bca; color: #fff; }
.lab-left { flex: 1; }
.lab-mid { flex: 1; text-align: center; }
.chev { width: 18px; height: 14px; flex: none; }

.main { flex: 1; min-width: 0; padding: 12px 15px 0; }
.crumbs {
  display: flex; align-items: center; list-style: none; margin: 0; height: 36px; padding: 0 15px;
  background: #f5f5f5; border-radius: 4px; font-size: 13px; color: #333;
}
.slash { color: #555; margin: 0 9px 0 5px; }
.crumb-on { color: #777; }
.h1 { margin: 16px 0 0; font-size: 33px; font-weight: 400; line-height: 40px; color: #333; }
.lead { margin: 8px 0 0; line-height: 18px; font-size: 13px; color: #333; }
.rule { height: 1px; background: #eee; margin-top: 16px; }

.version-row { display: flex; align-items: flex-end; justify-content: flex-end; margin-top: 32px; padding-right: 175px; height: 54px; }
.version { width: 237px; align-self: flex-start; margin-right: 14px; }
.version-label { display: block; text-align: center; font: 700 10px Roboto, sans-serif; line-height: 12px; color: #777; width: 279px; white-space: nowrap; }
.version-select { height: 36px; display: flex; align-items: center; justify-content: space-between; padding: 9px 8px 0 2px; border-bottom: 1px solid #ddd; font-size: 13px; color: #333; }
.sel-caret { width: 0; height: 0; border-left: 4px solid transparent; border-right: 4px solid transparent; border-top: 4px solid #757575; }
.fabs { display: flex; gap: 19.500px; }
.fab { width: 40px; height: 40px; border: 0; padding: 0; border-radius: 50%; display: flex; align-items: center; justify-content: center; box-shadow: 0 2px 5px rgba(0,0,0,.25); }
.fab svg { width: 24px; height: 24px; }
.fab-indigo { background: #3f51b5; }
.fab-blue { background: #448aff; }
.fab-red { background: #f44336; }

.palette { display: flex; justify-content: center; gap: 21px; margin: 38px 0 0 5.500px; width: 1418px; color: #000; --ring: 3px; }
.pal { width: 35px; height: 35px; flex: none; }
.ring { stroke-width: var(--ring, 2px); }

.canvas { position: relative; width: 1419px; height: 500px; margin: 20px 0 0 5px; border: 1px solid #ccc; border-radius: 6px; background: #fff; }
.graph { display: block; width: 1417px; height: 498px; color: #3f51b5; }
.labels text { font: 12.800px "Liberation Sans", Arial, sans-serif; fill: #5060bc; text-anchor: middle; }
.labels .sel { font-weight: 700; fill: #3f51b5; }
.edit {
  position: absolute; left: 10px; top: 17px; width: 83px; height: 25px; display: flex; align-items: center;
  background: #fdfdfd; border-radius: 4px; box-shadow: 2px 2px 5px rgba(0,0,0,.35);
  font: 14px "Liberation Serif", serif; color: #555;
}
.edit-ic { width: 24px; height: 24px; flex: none; margin-right: 7px; }
.strip { height: 7px; flex: none; background: #f8f8f8; }
```
